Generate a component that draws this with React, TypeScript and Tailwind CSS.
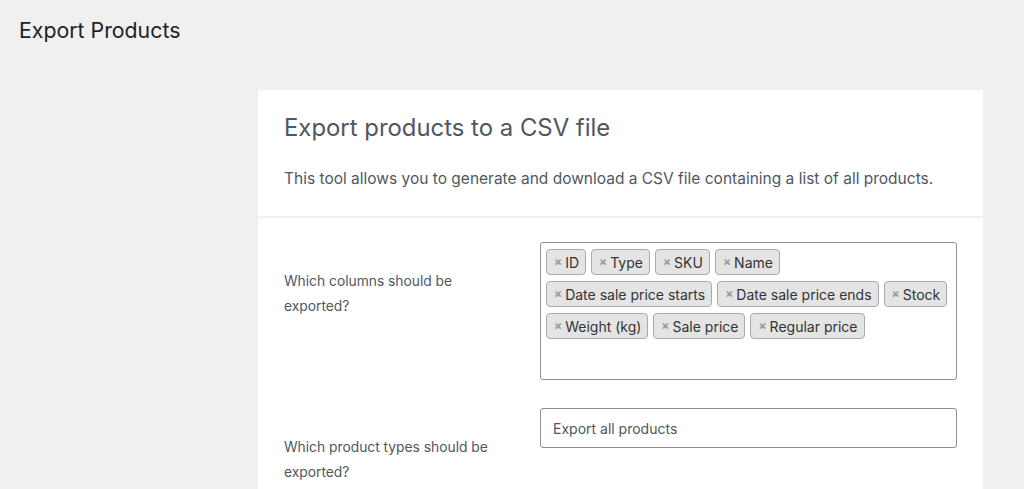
const columns = [
  ['ID', 'Type', 'SKU', 'Name'],
  ['Date sale price starts', 'Date sale price ends', 'Stock'],
  ['Weight (kg)', 'Sale price', 'Regular price'],
];

function Tag({ label }: { label: string }) {
  return (
    <span className="flex h-[26px] items-center rounded-[4px] border border-[#aaaaaa] bg-[#e4e4e4] pl-[7px] pr-[6px] text-[14px] text-[#333333]">
      <span className="mr-[3px] text-[12px] font-bold text-[#999999]">×</span>
      {label}
    </span>
  );
}

export default function App() {
  return (
    <div
      className="min-h-[489px] bg-[#f0f0f1] text-[#50575e]"
      style={{ fontFamily: 'Inter, "Liberation Sans", sans-serif' }}
    >
      <h1 className="px-[19px] pt-[17px] text-[21.3px] leading-[26px] text-[#1d2327]">Export Products</h1>

      <div className="ml-[258px] mt-[47px] w-[725px] bg-white">
        {/* en-tête de la carte */}
        <div className="border-b-2 border-[#f0f0f1] px-[26px] pt-[23px] pb-[25px]">
          <h2 className="text-[23.9px] leading-[30px] text-[#50575e]">Export products to a CSV file</h2>
          <p className="mt-[24px] text-[15.5px] leading-[24px] text-[#50575e]">
            This tool allows you to generate and download a CSV file containing a list of all products.
          </p>
        </div>

        <div className="px-[26px] pt-[24px]">
          <div className="flex">
            <div className="w-[256px] pt-[27px] text-[13.8px] leading-[25px]">
              Which columns should be
              <br />
              exported?
            </div>
            <div className="h-[138px] flex-1 rounded-[3px] border border-[#8c8f94] px-[5px] pt-[6px]">
              <div className="flex flex-col gap-[6px]">
                {columns.map((row, i) => (
                  <div key={i} className="flex gap-[5px]">
                    {row.map((c) => (
                      <Tag key={c} label={c} />
                    ))}
                  </div>
                ))}
              </div>
            </div>
          </div>

          <div className="mt-[28px] flex pb-[20px]">
            <div className="w-[256px] pt-[27px] text-[13.8px] leading-[25px]">
              Which product types should be
              <br />
              exported?
            </div>
            <div className="flex-1">
              <div className="flex h-[40px] items-center rounded-[3px] border border-[#8c8f94] px-[12px] text-[14px] text-[#50575e]">
                Export all products
              </div>
            </div>
          </div>
        </div>
      </div>
    </div>
  );
}
